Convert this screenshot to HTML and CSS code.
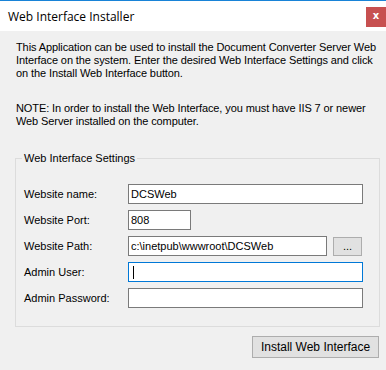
FILE: index.html
```html
<!DOCTYPE html>
<html lang="en">
<head>
    <meta charset="UTF-8">
    <title>Web Interface Installer</title>
    <link rel="stylesheet" href="styles.css">
</head>
<body>

<div class="window">
    <div class="title-bar">
        <span class="title">Web Interface Installer</span>
        <span class="close-btn">x</span>
    </div>
    <div class="content">
        <p class="intro">This Application can be used to install the Document Converter Server Web Interface on the system. Enter the desired Web Interface Settings and click on the Install Web Interface button.</p>
        <p class="note">NOTE: In order to install the Web Interface, you must have IIS 7 or newer Web Server installed on the computer.</p>

        <fieldset class="settings">
            <legend>Web Interface Settings</legend>
            <div class="form-grid">
                <label for="siteName">Website name:</label>
                <input type="text" id="siteName" class="wide" value="DCSWeb">

                <label for="sitePort">Website Port:</label>
                <input type="text" id="sitePort" class="port" value="808">

                <label for="sitePath">Website Path:</label>
                <div class="path-row">
                    <input type="text" id="sitePath" class="path" value="c:\inetpub\wwwroot\DCSWeb">
                    <button class="btn browse">...</button>
                </div>

                <label for="adminUser">Admin User:</label>
                <div class="input-focus wide"><span class="caret"></span></div>

                <label for="adminPass">Admin Password:</label>
                <input type="password" id="adminPass" class="wide">
            </div>
        </fieldset>

        <div class="actions">
            <button class="btn install">Install Web Interface</button>
        </div>
    </div>
</div>

</body>
</html>
```

FILE: styles.css
```css
body {
    margin: 0;
    font-family: "Liberation Sans", Arial, sans-serif;
    font-size: 11px;
    color: #000;
    background-color: #f0f0f0;
}
.window {
    width: 386px;
    height: 370px;
    border-top: 1px solid #1883d7;
    box-sizing: border-box;
    background-color: #f0f0f0;
}
.title-bar {
    height: 30px;
    background-color: #fff;
    display: flex;
    align-items: center;
    justify-content: space-between;
}
.title {
    font-family: "Open Sans", "Noto Sans", sans-serif;
    font-size: 12px;
    padding-left: 8px;
    color: #000;
}
.close-btn {
    width: 20px;
    height: 20px;
    background-color: #c75050;
    color: #fff;
    font-family: "DejaVu Sans", sans-serif;
    font-weight: bold;
    font-size: 10px;
    line-height: 18px;
    text-align: center;
    margin-top: 2px;
}
.content {
    padding: 10px 7px 0 16px;
}
.intro, .note {
    margin: 0;
    line-height: 13px;
    letter-spacing: -0.1px;
}
.note {
    margin-top: 22px;
}
.settings {
    margin: 24px 0 0 -1px;
    padding: 19px 8px 18px 8px;
    border: 1px solid #dcdcdc;
    width: 347px;
}
.settings legend {
    padding: 0 2px;
    margin-left: -2px;
    line-height: 13px;
}
.form-grid {
    display: grid;
    grid-template-columns: 104px 1fr;
    row-gap: 6px;
    align-items: center;
}
input[type="text"], input[type="password"], .input-focus {
    height: 20px;
    box-sizing: border-box;
    border: 1px solid #7a7a7a;
    padding: 0 2px;
    font-family: "Liberation Sans", Arial, sans-serif;
    font-size: 11px;
    background-color: #fff;
    margin: 0;
    outline: none;
}
.wide {
    width: 235px;
}
.port {
    width: 63px;
}
.path {
    width: 199px;
}
.input-focus {
    border-color: #0078d7;
    display: flex;
    align-items: center;
}
.caret {
    width: 1px;
    height: 13px;
    background-color: #000;
    margin-left: 2px;
}
.path-row {
    display: flex;
    gap: 6px;
    align-items: center;
}
.btn {
    background-color: #e1e1e1;
    border: 1px solid #adadad;
    font-family: "Liberation Sans", Arial, sans-serif;
    font-size: 11px;
    color: #000;
    padding: 0;
    margin: 0;
}
.browse {
    width: 29px;
    height: 19px;
    line-height: 15px;
}
.actions {
    display: flex;
    justify-content: flex-end;
    padding-top: 9px;
}
.install {
    width: 127px;
    height: 22px;
    font-size: 12px;
}
```
